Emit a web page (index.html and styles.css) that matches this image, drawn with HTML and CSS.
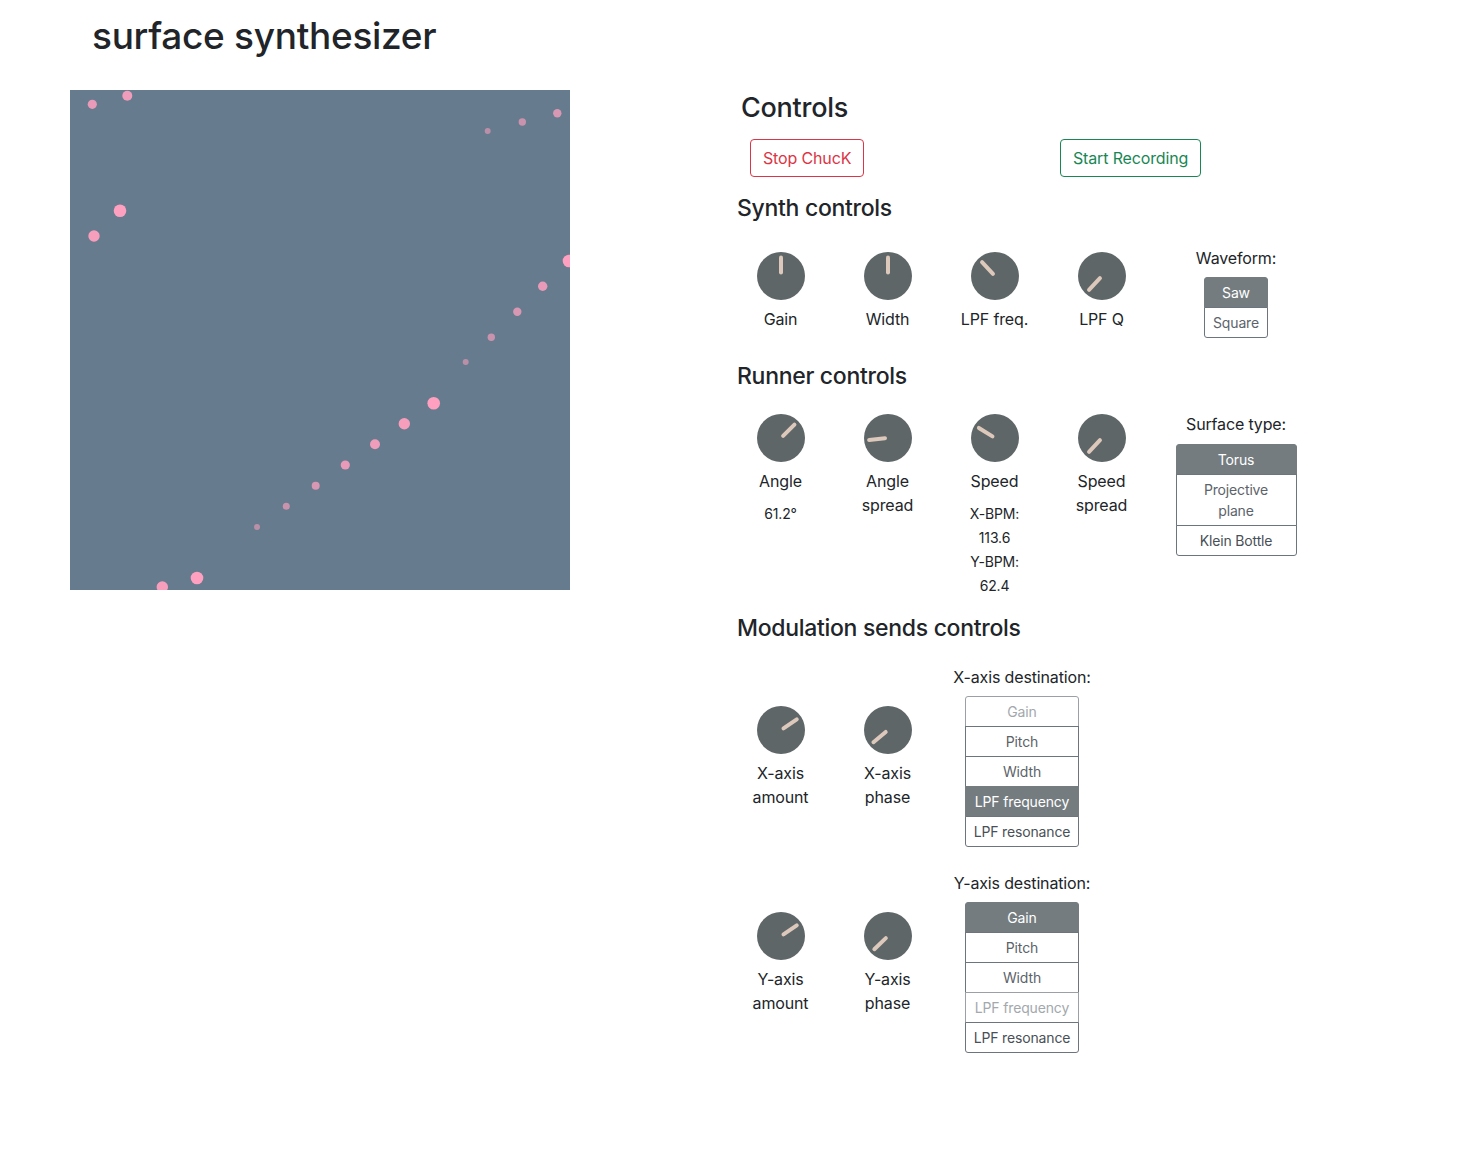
FILE: index.html
```html
<!DOCTYPE html>
<html lang="en">
<head>
<meta charset="utf-8">
<title>surface synthesizer</title>
<link rel="stylesheet" href="styles.css">
</head>
<body>
<h1 class="title">surface synthesizer</h1>
<div class="main">
  <div class="left">
    <svg class="surface" width="500" height="500" viewBox="0 0 500 500">
      <rect width="500" height="500" fill="#667b8d"/>
      <g fill="#ffa0c0">
        <circle cx="22.3" cy="14.3" r="4.6" opacity="0.85"/>
        <circle cx="57.3" cy="5.7" r="5" opacity="0.9"/>
        <circle cx="50" cy="120.7" r="6.3"/>
        <circle cx="24" cy="146" r="5.7" opacity="0.95"/>
        <circle cx="417.7" cy="41" r="3" opacity="0.55"/>
        <circle cx="452.3" cy="32" r="3.7" opacity="0.65"/>
        <circle cx="487.3" cy="23.3" r="4.2" opacity="0.75"/>
        <circle cx="499" cy="171" r="6.3"/>
        <circle cx="472.7" cy="196.3" r="4.7" opacity="0.85"/>
        <circle cx="447.3" cy="221.7" r="4.2" opacity="0.75"/>
        <circle cx="421.3" cy="247.3" r="3.7" opacity="0.65"/>
        <circle cx="395.7" cy="272" r="3" opacity="0.55"/>
        <circle cx="363.7" cy="313.3" r="6.3"/>
        <circle cx="334.3" cy="333.7" r="5.7" opacity="0.95"/>
        <circle cx="305" cy="354.3" r="5" opacity="0.9"/>
        <circle cx="275.3" cy="375" r="4.6" opacity="0.85"/>
        <circle cx="245.7" cy="395.7" r="4" opacity="0.75"/>
        <circle cx="216.3" cy="416.3" r="3.5" opacity="0.65"/>
        <circle cx="187" cy="437" r="3" opacity="0.55"/>
        <circle cx="127" cy="488" r="6.3"/>
        <circle cx="92.3" cy="497" r="5.7" opacity="0.95"/>
      </g>
    </svg>
  </div>
  <div class="right">
    <h3 class="controls-title">Controls</h3>
    <div class="buttons">
      <button class="btn btn-danger">Stop ChucK</button>
      <button class="btn btn-success">Start Recording</button>
    </div>

    <h4 class="section-title first">Synth controls</h4>
    <div class="knob-row row-center">
      <div class="knob-cell">
        <svg class="knob" width="48" height="48" viewBox="-24 -24 48 48"><circle r="24" class="knob-body"/><line x1="0" y1="-3.5" x2="0" y2="-18.5" class="knob-pointer" transform="rotate(0)"/></svg>
        <div class="knob-label">Gain</div>
      </div>
      <div class="knob-cell">
        <svg class="knob" width="48" height="48" viewBox="-24 -24 48 48"><circle r="24" class="knob-body"/><line x1="0" y1="-3.5" x2="0" y2="-18.5" class="knob-pointer" transform="rotate(0)"/></svg>
        <div class="knob-label">Width</div>
      </div>
      <div class="knob-cell">
        <svg class="knob" width="48" height="48" viewBox="-24 -24 48 48"><circle r="24" class="knob-body"/><line x1="0" y1="-3" x2="0" y2="-19" class="knob-pointer" transform="rotate(-43)"/></svg>
        <div class="knob-label">LPF freq.</div>
      </div>
      <div class="knob-cell">
        <svg class="knob" width="48" height="48" viewBox="-24 -24 48 48"><circle r="24" class="knob-body"/><line x1="0" y1="-3" x2="0" y2="-19" class="knob-pointer" transform="rotate(-137)"/></svg>
        <div class="knob-label">LPF Q</div>
      </div>
      <div class="select-cell no-shift">
        <div class="select-label tight">Waveform:</div>
        <div class="btn-group">
          <button class="gbtn active">Saw</button>
          <button class="gbtn">Square</button>
        </div>
      </div>
    </div>

    <h4 class="section-title runner">Runner controls</h4>
    <div class="knob-row row-start">
      <div class="knob-cell">
        <svg class="knob" width="48" height="48" viewBox="-24 -24 48 48"><circle r="24" class="knob-body"/><line x1="0" y1="-3" x2="0" y2="-19" class="knob-pointer" transform="rotate(45)"/></svg>
        <div class="knob-label">Angle</div>
        <div class="knob-info">61.2°</div>
      </div>
      <div class="knob-cell">
        <svg class="knob" width="48" height="48" viewBox="-24 -24 48 48"><circle r="24" class="knob-body"/><line x1="0" y1="-3" x2="0" y2="-19" class="knob-pointer" transform="rotate(-96)"/></svg>
        <div class="knob-label">Angle<br>spread</div>
      </div>
      <div class="knob-cell">
        <svg class="knob" width="48" height="48" viewBox="-24 -24 48 48"><circle r="24" class="knob-body"/><line x1="0" y1="-3" x2="0" y2="-19" class="knob-pointer" transform="rotate(-58)"/></svg>
        <div class="knob-label">Speed</div>
        <div class="knob-info">X-BPM:<br>113.6<br>Y-BPM:<br>62.4</div>
      </div>
      <div class="knob-cell">
        <svg class="knob" width="48" height="48" viewBox="-24 -24 48 48"><circle r="24" class="knob-body"/><line x1="0" y1="-3" x2="0" y2="-19" class="knob-pointer" transform="rotate(-137)"/></svg>
        <div class="knob-label">Speed<br>spread</div>
      </div>
      <div class="select-cell">
        <div class="select-label">Surface type:</div>
        <div class="btn-group surface-group">
          <button class="gbtn active">Torus</button>
          <button class="gbtn">Projective plane</button>
          <button class="gbtn dark">Klein Bottle</button>
        </div>
      </div>
    </div>

    <h4 class="section-title mod">Modulation sends controls</h4>
    <div class="knob-row row-center mod-row">
      <div class="knob-cell">
        <svg class="knob" width="48" height="48" viewBox="-24 -24 48 48"><circle r="24" class="knob-body"/><line x1="0" y1="-3" x2="0" y2="-19" class="knob-pointer" transform="rotate(56)"/></svg>
        <div class="knob-label">X-axis<br>amount</div>
      </div>
      <div class="knob-cell">
        <svg class="knob" width="48" height="48" viewBox="-24 -24 48 48"><circle r="24" class="knob-body"/><line x1="0" y1="-3" x2="0" y2="-19" class="knob-pointer" transform="rotate(-130)"/></svg>
        <div class="knob-label">X-axis<br>phase</div>
      </div>
      <div class="select-cell">
        <div class="select-label tight">X-axis destination:</div>
        <div class="btn-group">
          <button class="gbtn disabled">Gain</button>
          <button class="gbtn">Pitch</button>
          <button class="gbtn">Width</button>
          <button class="gbtn active">LPF frequency</button>
          <button class="gbtn dark">LPF resonance</button>
        </div>
      </div>
    </div>

    <div class="knob-row row-center mod-row second-mod">
      <div class="knob-cell">
        <svg class="knob" width="48" height="48" viewBox="-24 -24 48 48"><circle r="24" class="knob-body"/><line x1="0" y1="-3" x2="0" y2="-19" class="knob-pointer" transform="rotate(56)"/></svg>
        <div class="knob-label">Y-axis<br>amount</div>
      </div>
      <div class="knob-cell">
        <svg class="knob" width="48" height="48" viewBox="-24 -24 48 48"><circle r="24" class="knob-body"/><line x1="0" y1="-3" x2="0" y2="-19" class="knob-pointer" transform="rotate(-134)"/></svg>
        <div class="knob-label">Y-axis<br>phase</div>
      </div>
      <div class="select-cell">
        <div class="select-label tight">Y-axis destination:</div>
        <div class="btn-group">
          <button class="gbtn active">Gain</button>
          <button class="gbtn">Pitch</button>
          <button class="gbtn">Width</button>
          <button class="gbtn disabled">LPF frequency</button>
          <button class="gbtn dark">LPF resonance</button>
        </div>
      </div>
    </div>
  </div>
</div>
</body>
</html>
```

FILE: styles.css
```css
* { box-sizing: border-box; }

html, body {
  margin: 0;
  padding: 0;
  background: #ffffff;
}

body {
  font-family: Inter, "Noto Sans", "Liberation Sans", sans-serif;
  font-size: 16px;
  line-height: 1.5;
  letter-spacing: -0.15px;
  color: #212529;
}

.title {
  margin: 14px 0 0 92px;
  font-size: 37px;
  line-height: 1.2;
  font-weight: 500;
  letter-spacing: -0.3px;
}

.main {
  display: flex;
  margin-top: 32px;
}

.left {
  width: 731px;
  flex: none;
  padding-left: 70px;
}

.surface {
  display: block;
}

.right {
  flex: 1;
  display: flex;
  flex-direction: column;
  align-items: flex-start;
}

.controls-title {
  margin: 2px 0 0 10px;
  font-size: 27px;
  line-height: 32.4px;
  font-weight: 500;
  letter-spacing: -0.25px;
}

.buttons {
  display: grid;
  grid-template-columns: 310px 310px;
  justify-items: start;
  margin-top: 14px;
  padding-left: 19px;
}

.btn {
  font-family: inherit;
  font-size: 16px;
  line-height: 24px;
  letter-spacing: -0.15px;
  padding: 6px 12px;
  border-radius: 4px;
  background: #fff;
  border: 1px solid;
}

.btn-danger { color: #dc3545; border-color: #dc3545; }
.btn-success { color: #198754; border-color: #198754; }

.section-title {
  margin: 0 0 22px 6px;
  font-size: 23px;
  line-height: 28.8px;
  font-weight: 500;
  letter-spacing: -0.3px;
}

.section-title.first { margin-top: 17px; margin-bottom: 23px; }
.section-title.runner { margin-top: 24px; margin-bottom: 24px; }
.section-title.mod { margin-top: 16px; margin-bottom: 24px; }

.knob-row {
  display: flex;
  margin-left: -4px;
}

.row-center { align-items: center; }
.row-start { align-items: flex-start; }

.second-mod { margin-top: 24px; }

.knob-cell {
  width: 107px;
  display: flex;
  flex-direction: column;
  align-items: center;
  text-align: center;
}

.mod-row .knob-cell { margin-bottom: 2px; }

.knob {
  display: block;
}

.knob-body { fill: #5e6667; }

.knob-pointer {
  stroke: #ddc8bc;
  stroke-width: 4;
  stroke-linecap: round;
}

.knob-label {
  margin-top: 7px;
  font-size: 16px;
  line-height: 24px;
}

.knob-info {
  margin-top: 9px;
  font-size: 14px;
  line-height: 24px;
}

.select-cell {
  width: 162px;
  display: flex;
  flex-direction: column;
  align-items: center;
  text-align: center;
  margin-top: -2px;
  margin-bottom: 2px;
}

.select-cell.no-shift {
  margin-top: 0;
  margin-bottom: 0;
}

.select-label {
  font-size: 16px;
  line-height: 24px;
  margin-bottom: 8px;
}

.select-label.tight { margin-bottom: 7px; }

.btn-group {
  display: flex;
  flex-direction: column;
  align-items: stretch;
}

.surface-group { width: 121px; }

.gbtn {
  font-family: inherit;
  font-size: 14px;
  line-height: 21px;
  letter-spacing: -0.15px;
  padding: 4px 8px;
  background: #fff;
  color: #5c636a;
  border: 1px solid #6c757d;
  border-radius: 0;
  margin-top: -1px;
  text-align: center;
}

.gbtn:first-child {
  margin-top: 0;
  border-top-left-radius: 3px;
  border-top-right-radius: 3px;
}

.gbtn:last-child {
  border-bottom-left-radius: 3px;
  border-bottom-right-radius: 3px;
}

.gbtn.active {
  background: #747c7f;
  border-color: #747c7f;
  color: #ffffff;
}

.gbtn.dark { color: #495057; }

.gbtn.disabled {
  color: #a3a8ad;
  border-color: #9aa0a5;
}
```
